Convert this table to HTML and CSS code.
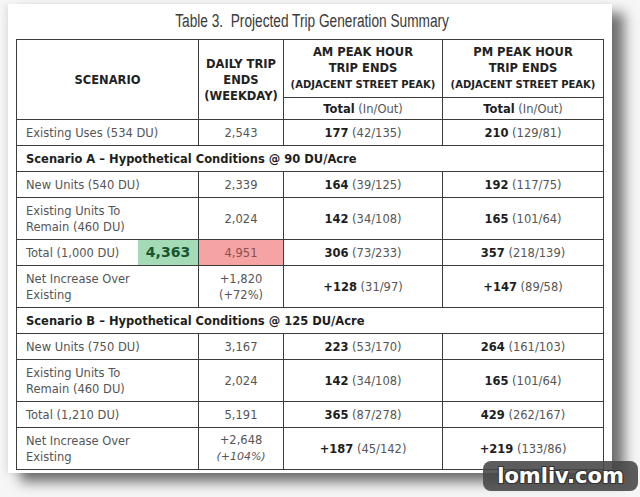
FILE: index.html
```html
<!DOCTYPE html>
<html>
<head>
<meta charset="utf-8">
<link rel="stylesheet" href="styles.css">
</head>
<body>
<div class="card">
  <div class="title"><span class="title-text">Table 3.&nbsp; Projected Trip Generation Summary</span></div>
  <table class="trips">
    <colgroup>
      <col class="c1"><col class="c2"><col class="c3"><col class="c4">
    </colgroup>
    <tr class="h1">
      <th rowspan="2">SCENARIO</th>
      <th rowspan="2">DAILY TRIP<br>ENDS<br>(WEEKDAY)</th>
      <th>AM PEAK HOUR<br>TRIP ENDS<br><span class="adj">(ADJACENT STREET PEAK)</span></th>
      <th>PM PEAK HOUR<br>TRIP ENDS<br><span class="adj">(ADJACENT STREET PEAK)</span></th>
    </tr>
    <tr class="h2">
      <td><b>Total</b> (In/Out)</td>
      <td><b>Total</b> (In/Out)</td>
    </tr>
    <tr class="r1">
      <td class="lbl">Existing Uses (534 DU)</td>
      <td>2,543</td>
      <td><b>177</b> (42/135)</td>
      <td><b>210</b> (129/81)</td>
    </tr>
    <tr class="sec">
      <td colspan="4">Scenario A – Hypothetical Conditions @ 90 DU/Acre</td>
    </tr>
    <tr class="r1">
      <td class="lbl">New Units (540 DU)</td>
      <td>2,339</td>
      <td><b>164</b> (39/125)</td>
      <td><b>192</b> (117/75)</td>
    </tr>
    <tr class="r2">
      <td class="lbl">Existing Units To<br>Remain (460 DU)</td>
      <td>2,024</td>
      <td><b>142</b> (34/108)</td>
      <td><b>165</b> (101/64)</td>
    </tr>
    <tr class="r1">
      <td class="lbl tot">Total (1,000 DU)<span class="green">4,363</span></td>
      <td class="red">4,951</td>
      <td><b>306</b> (73/233)</td>
      <td><b>357</b> (218/139)</td>
    </tr>
    <tr class="r2">
      <td class="lbl">Net Increase Over<br>Existing</td>
      <td>+1,820<br>(+72%)</td>
      <td><b>+128</b> (31/97)</td>
      <td><b>+147</b> (89/58)</td>
    </tr>
    <tr class="sec">
      <td colspan="4">Scenario B – Hypothetical Conditions @ 125 DU/Acre</td>
    </tr>
    <tr class="r1">
      <td class="lbl">New Units (750 DU)</td>
      <td>3,167</td>
      <td><b>223</b> (53/170)</td>
      <td><b>264</b> (161/103)</td>
    </tr>
    <tr class="r2">
      <td class="lbl">Existing Units To<br>Remain (460 DU)</td>
      <td>2,024</td>
      <td><b>142</b> (34/108)</td>
      <td><b>165</b> (101/64)</td>
    </tr>
    <tr class="r1">
      <td class="lbl">Total (1,210 DU)</td>
      <td>5,191</td>
      <td><b>365</b> (87/278)</td>
      <td><b>429</b> (262/167)</td>
    </tr>
    <tr class="r2">
      <td class="lbl">Net Increase Over<br>Existing</td>
      <td>+2,648<br><i>(+104%)</i></td>
      <td><b>+187</b> (45/142)</td>
      <td><b>+219</b> (133/86)</td>
    </tr>
  </table>
</div>
<div class="mark">lomliv.com</div>
</body>
</html>
```

FILE: styles.css
```css
html, body {
  margin: 0;
  padding: 0;
}
body {
  width: 640px;
  height: 497px;
  background: #f6f6f6;
  position: relative;
  overflow: hidden;
  font-family: "DejaVu Sans", sans-serif;
}
.card {
  position: absolute;
  left: 8px;
  top: 4px;
  width: 604px;
  height: 469px;
  box-sizing: border-box;
  background: #fff;
  padding: 0 8px;
  box-shadow: 12px 9px 12px rgba(0, 0, 0, 0.55), -3px 1px 6px rgba(0, 0, 0, 0.08);
}
.title {
  height: 35px;
  line-height: 34px;
  text-align: center;
  font-family: "Liberation Sans", Arial, sans-serif;
  font-size: 18px;
  color: #3a3a3a;
  padding-left: 4px;
}
.title-text {
  display: inline-block;
  transform: scaleX(0.76);
}
.trips {
  border-collapse: collapse;
  table-layout: fixed;
  width: 587px;
  font-size: 11.5px;
  color: #555;
}
.c1 { width: 182px; }
.c2 { width: 85px; }
.c3 { width: 159px; }
.c4 { width: 161px; }
.trips th, .trips td {
  border: 1px solid #3c3c3c;
  padding: 0;
  text-align: center;
  vertical-align: middle;
  line-height: 16px;
}
.trips th {
  color: #222;
  font-weight: bold;
  font-size: 11.5px;
}
.adj {
  font-size: 10px;
}
.trips b {
  color: #1e1e1e;
}
.h1 th { height: 57px; }
.h2 td { height: 21px; }
.r1 td { height: 25px; }
.r2 td { height: 41px; }
.sec td {
  height: 25px;
  text-align: left;
  padding-left: 9px;
  font-weight: bold;
  color: #1e1e1e;
}
.trips td.lbl {
  text-align: left;
  padding-left: 9px;
}
.tot {
  position: relative;
}
.green {
  position: absolute;
  right: 0;
  top: 0;
  bottom: 0;
  width: 60px;
  background: #a4dab6;
  color: #17552f;
  font-weight: bold;
  font-size: 14px;
  text-align: center;
  line-height: 25px;
}
.trips td.red {
  background: #f5a3a3;
  color: #8a5050;
}
.trips i {
  font-size: 11px;
}
.mark {
  position: absolute;
  left: 483px;
  top: 461px;
  width: 155px;
  height: 30px;
  border-radius: 8px;
  background: rgba(70, 70, 70, 0.88);
  color: #fff;
  font-family: "DejaVu Sans", sans-serif;
  font-weight: bold;
  font-size: 21px;
  line-height: 30px;
  text-align: center;
  text-shadow: 1px 1px 0 #333, -1px -1px 0 #333, 1px -1px 0 #333, -1px 1px 0 #333;
}
```
